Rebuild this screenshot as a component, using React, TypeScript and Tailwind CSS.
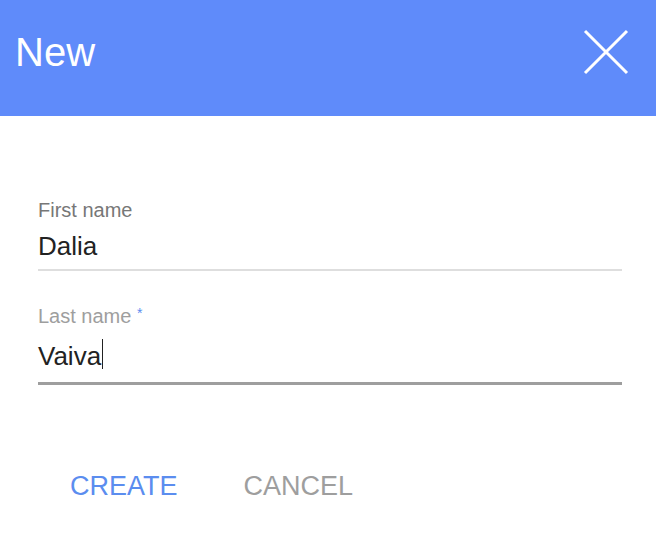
export default function App() {
  return (
    <div className="w-[656px] h-[544px] bg-white" style={{ fontFamily: '"Liberation Sans", Arial, sans-serif' }}>
      <div className="h-[116px] bg-[#5f8bfa] flex items-center justify-between pl-[15px] pr-[27px] pb-[12px]">
        <div className="text-white text-[40px] leading-none">New</div>
        <svg width="46" height="46" viewBox="0 0 46 46" className="block">
          <path d="M2 2 L44 44 M44 2 L2 44" stroke="white" strokeWidth="3" />
        </svg>
      </div>
      <div className="px-[38px] pt-[84px]">
        <div className="w-[584px]">
          <div className="text-[20px] leading-none text-[#777]">First name</div>
          <div className="mt-[13px] text-[26px] leading-none text-[#222]">Dalia</div>
          <div className="mt-[10px] h-[2px] bg-[#dedede]" />
          <div className="mt-[35px] text-[20px] leading-none text-[#9e9e9e]">
            Last name <span className="text-[#5b8def] text-[14px] align-top">*</span>
          </div>
          <div className="mt-[17px] text-[26px] leading-none text-[#222]">
            <span className="relative">
              Vaiva
              <span className="absolute right-[-2px] top-[-2px] w-[1px] h-[30px] bg-[#222]" />
            </span>
          </div>
          <div className="mt-[13px] h-[3px] bg-[#9e9e9e]" />
        </div>
        <div className="flex mt-[88px] pl-[32px] gap-[66px]">
          <div className="text-[27px] leading-none text-[#5b8def]">CREATE</div>
          <div className="text-[27px] leading-none text-[#9e9e9e]">CANCEL</div>
        </div>
      </div>
    </div>
  );
}
